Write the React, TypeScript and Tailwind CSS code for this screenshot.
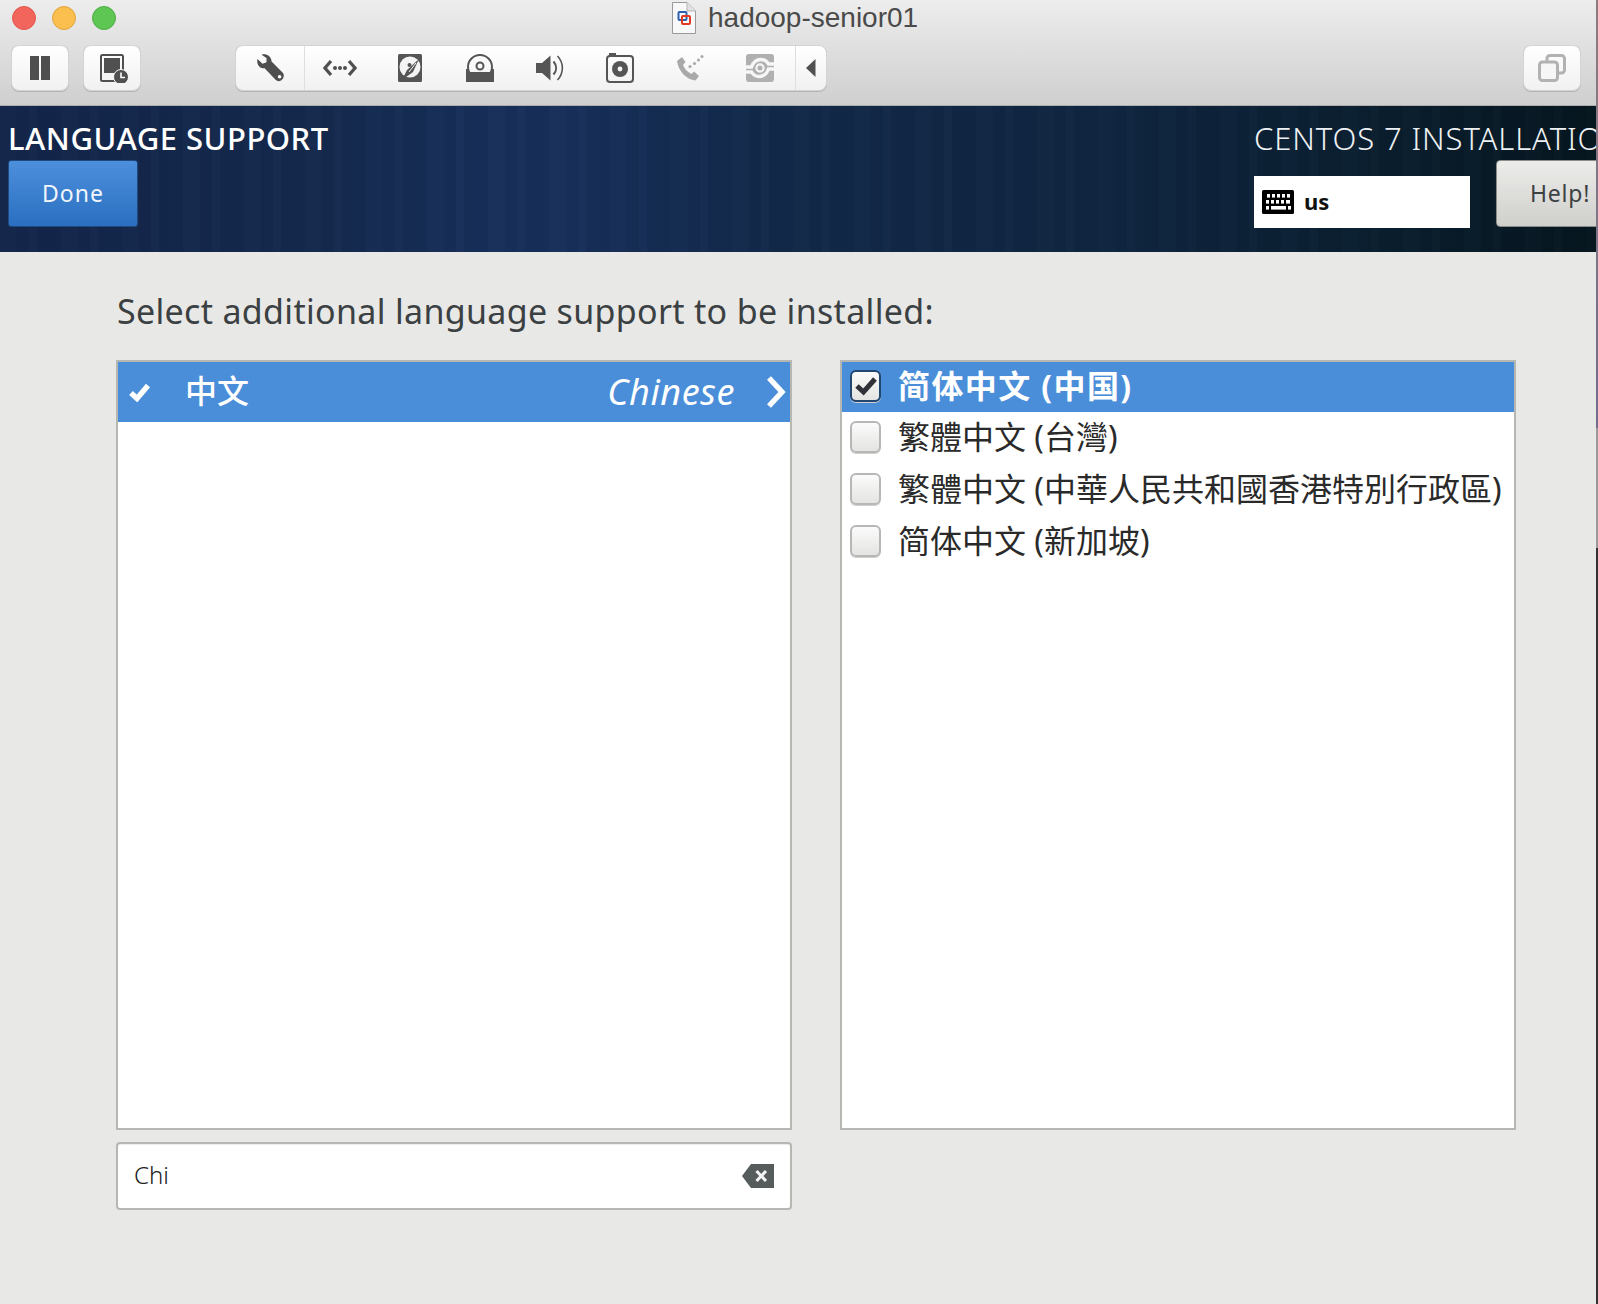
import React from "react";

const UI = "font-['Noto_Sans','Open_Sans','Noto_Sans_CJK_SC',sans-serif]";
const CJK = "font-['Noto_Sans','Noto_Sans_CJK_TC',sans-serif]";

function Wrench() {
  return (
    <svg width="28" height="28" viewBox="0 0 28 28">
      <path d="M1.5 5 L6.5 9.8 L10.5 8.2 L10.5 4 L5.5 .8 C9.5 -.6 15 1.2 15.6 7.4 L27 19 C28.6 21 27.8 25 25 26.6 C23 27.6 21 27.2 19.8 26 L8.6 14.2 C4 15 .2 10.4 1.5 5Z" fill="#4f4f4f" />
      <circle cx="23.6" cy="22.8" r="1.8" fill="#fff" />
    </svg>
  );
}
function Net() {
  return (
    <svg width="34" height="18" viewBox="0 0 34 18">
      <path d="M8 2 L2 9 L8 16 M26 2 L32 9 L26 16" fill="none" stroke="#505050" strokeWidth="3.2" />
      <circle cx="12" cy="9" r="2" fill="#505050" />
      <circle cx="17" cy="9" r="2" fill="#505050" />
      <circle cx="22" cy="9" r="2" fill="#505050" />
    </svg>
  );
}
function Hdd() {
  return (
    <svg width="24" height="28" viewBox="0 0 24 28">
      <rect width="24" height="28" rx="1.5" fill="#555" />
      <circle cx="12" cy="13" r="10.5" fill="#f4f4f4" />
      <path d="M4 26 L9 16 L21 5 L15 18 Z" fill="#555" />
      <path d="M11 18 L18 9" stroke="#f4f4f4" strokeWidth="1" />
      <circle cx="11.5" cy="11" r="2" fill="#555" />
    </svg>
  );
}
function Cd() {
  return (
    <svg width="28" height="28" viewBox="0 0 28 28">
      <circle cx="14" cy="13" r="12" fill="none" stroke="#555" strokeWidth="2" />
      <circle cx="14" cy="12" r="3.5" fill="none" stroke="#555" strokeWidth="2" />
      <path d="M0 28 V15 H2 V18 H26 V15 H28 V28 Z" fill="#555" />
    </svg>
  );
}
function Speaker() {
  return (
    <svg width="28" height="28" viewBox="0 0 28 28">
      <path d="M0 9 H6 L14.5 1.5 V26.5 L6 19 H0 Z" fill="#555" />
      <path d="M17.5 7.5 C21 11.5 21 16.5 17.5 20.5" fill="none" stroke="#555" strokeWidth="2" />
      <path d="M21.5 2 C28 9 28 19 21.5 26" fill="none" stroke="#555" strokeWidth="1.6" />
    </svg>
  );
}
function Camera() {
  return (
    <svg width="28" height="30" viewBox="0 0 28 30">
      <rect x="1" y="3" width="26" height="26" rx="3" fill="none" stroke="#555" strokeWidth="2" />
      <rect x="3" y="0" width="7" height="3" fill="#555" />
      <circle cx="14" cy="16" r="8" fill="#555" />
      <circle cx="14" cy="16" r="2.4" fill="#f6f6f6" />
    </svg>
  );
}
function Phone() {
  return (
    <svg width="28" height="28" viewBox="0 0 28 28">
      <path d="M1 7 L6 3 L9.5 8 L7 11 C8.5 15 11.5 18 15.5 20 L18 17.5 L23 22 L19.5 26.5 C10 25.5 2.5 17 1 7Z" fill="#a9a9a9" />
      <circle cx="14" cy="12.5" r="1.6" fill="#a9a9a9" />
      <circle cx="18.5" cy="9.5" r="1.6" fill="#a9a9a9" />
      <circle cx="22.5" cy="6" r="1.5" fill="#a9a9a9" />
      <circle cx="26" cy="2.5" r="1.5" fill="#a9a9a9" />
    </svg>
  );
}
function Cycle() {
  return (
    <svg width="28" height="28" viewBox="0 0 28 28">
      <rect width="28" height="28" rx="3" fill="#b0b0b0" />
      <path d="M0 13 H5.5 C7.5 7.5 11 5.5 15 5.5 C18.5 5.5 21 7.5 22.5 10 L28 10" fill="none" stroke="#f6f6f6" strokeWidth="3.4" />
      <path d="M28 15 H22.5 C20.5 20.5 17 22.5 13 22.5 C9.5 22.5 7 20.5 5.5 18 L0 18" fill="none" stroke="#f6f6f6" strokeWidth="3.4" />
      <circle cx="14" cy="14" r="3.6" fill="#b0b0b0" stroke="#f6f6f6" strokeWidth="2.2" />
    </svg>
  );
}
function Keyboard() {
  const keys: [number, number, number][] = [
    [5, 4, 3], [10, 4, 3], [15, 4, 3], [20, 4, 3], [25, 4, 3],
    [4, 10, 3], [9, 10, 3], [14, 10, 3], [19, 10, 3], [24, 10, 4],
    [4, 16, 3], [9, 16, 15], [26, 16, 3],
  ];
  return (
    <svg width="32" height="24" viewBox="0 0 32 24">
      <rect width="32" height="24" rx="1.5" fill="#000" />
      {keys.map(([x, y, w], i) => (
        <rect key={i} x={x} y={y} width={w} height="3.6" fill="#fff" />
      ))}
    </svg>
  );
}
function DocIcon() {
  return (
    <svg width="24" height="32" viewBox="0 0 24 32">
      <path d="M.5 .5 H15 L23.5 9 V31.5 H.5 Z" fill="#f8f8f8" stroke="#9a9a9a" />
      <path d="M15 .5 V9 H23.5" fill="#e2e2e2" stroke="#b5b5b5" />
      <rect x="6.5" y="10" width="8" height="8" rx="1" fill="none" stroke="#2a62b0" strokeWidth="2" />
      <rect x="10" y="14" width="8" height="8" rx="1" fill="none" stroke="#e23a22" strokeWidth="2" />
    </svg>
  );
}

function CheckBox({ checked }: { checked?: boolean }) {
  return (
    <span
      className={
        "flex h-8 w-[31px] shrink-0 items-center justify-center rounded-[6px] border-2 bg-gradient-to-b from-[#fbfbfb] to-[#e4e4e2] shadow-[0_1px_0_#cfcfcf] " +
        (checked ? "border-[#23476f]" : "border-[#b7b7b5]")
      }
    >
      {checked && (
        <svg width="24" height="20" viewBox="0 0 24 20">
          <path d="M3 10 L9.5 16 L21 3" fill="none" stroke="#2f3338" strokeWidth="5" />
        </svg>
      )}
    </span>
  );
}

const locales = [
  { t: "简体中文 (中国)", lang: "zh-CN", on: true, h: "h-[50px] pb-[2px]" },
  { t: "繁體中文 (台灣)", lang: "zh-TW", on: false, h: "h-[52px] pb-[3px]" },
  { t: "繁體中文 (中華人民共和國香港特別行政區)", lang: "zh-HK", on: false, h: "h-[52px] pb-[3px]" },
  { t: "简体中文 (新加坡)", lang: "zh-SG", on: false, h: "h-[52px] pb-[3px]" },
];

export default function App() {
  const btn = "flex h-11 w-14 items-center justify-center rounded-[7px] bg-gradient-to-b from-white to-[#f1f1f1] shadow-[0_0_0_1px_#d4d4d4,0_1px_0_1px_#b4b4b4]";
  const cell = "flex h-full w-[70px] items-center justify-center";
  return (
    <div className={"relative flex h-[1304px] w-[1598px] flex-col overflow-hidden bg-[#e8e8e6] " + UI}>
      {/* window title bar */}
      <div className="flex h-[106px] shrink-0 flex-col border-b border-[#adadad] bg-gradient-to-b from-[#ededed] to-[#cfcfcf]">
        <div className="flex h-[46px] items-start">
          <div className="flex gap-4 pl-3 pt-1.5">
            <span className="h-6 w-6 rounded-full border border-[#e2564d] bg-[#f2655c]" />
            <span className="h-6 w-6 rounded-full border border-[#e0a53c] bg-[#fbbf4f]" />
            <span className="h-6 w-6 rounded-full border border-[#4ead46] bg-[#5ec653]" />
          </div>
          <div className="ml-[556px] flex items-center pt-0.5">
            <DocIcon />
            <span className="ml-3 font-['Liberation_Sans',sans-serif] text-[28px] leading-8 text-[#4a4a4a]">hadoop-senior01</span>
          </div>
        </div>
        <div className="flex items-start pl-3">
          <div className={btn}>
            <svg width="20" height="24" viewBox="0 0 20 24">
              <rect width="9" height="24" fill="#4e4e4e" />
              <rect x="11" width="9" height="24" fill="#4e4e4e" />
            </svg>
          </div>
          <div className={"ml-4 " + btn}>
            <svg width="32" height="30" viewBox="0 0 32 30">
              <rect x="5" y="2" width="22" height="26" rx="1.5" fill="none" stroke="#505050" strokeWidth="2" />
              <rect x="8" y="5" width="16" height="15" fill="#505050" />
              <circle cx="25" cy="24" r="7.5" fill="#505050" stroke="#f8f8f8" strokeWidth="1" />
              <path d="M25 19.5 V24.5 H29" fill="none" stroke="#fff" strokeWidth="1.6" />
            </svg>
          </div>
          <div className={"ml-24 flex w-[590px] overflow-hidden " + btn}>
            <div className="flex h-full w-[69px] items-center justify-center border-r border-[#dedede]"><Wrench /></div>
            <div className={cell}><Net /></div>
            <div className={cell}><Hdd /></div>
            <div className={cell}><Cd /></div>
            <div className={cell}><Speaker /></div>
            <div className={cell}><Camera /></div>
            <div className={cell}><Phone /></div>
            <div className={cell}><Cycle /></div>
            <div className="flex h-full flex-1 items-center justify-center border-l border-[#dedede]">
              <svg width="10" height="18" viewBox="0 0 10 18"><path d="M9.5 0 V18 L0 9 Z" fill="#505050" /></svg>
            </div>
          </div>
          <div className={"ml-[698px] " + btn}>
            <svg width="28" height="28" viewBox="0 0 28 28" fill="none" stroke="#b2b2b2" strokeWidth="3">
              <rect x="9" y="1.5" width="17.5" height="17.5" rx="3" />
              <rect x="1.5" y="8" width="18" height="18.5" rx="3" fill="#f6f6f6" />
            </svg>
          </div>
        </div>
      </div>

      {/* installer header */}
      <div className="flex h-[146px] shrink-0 overflow-hidden bg-[repeating-linear-gradient(90deg,#ffffff02_0px,#ffffff02_17px,#00000006_17px,#00000006_29px,#ffffff03_29px,#ffffff03_37px,#00000008_37px,#00000008_61px),linear-gradient(90deg,#13264a_0%,#14294d_20%,#172f5a_30%,#172f5a_36%,#12294a_48%,#0f2540_70%,#0a1f30_85%,#06161f_100%)]">
        <div className="flex w-[1254px] shrink-0 flex-col pl-2">
          <div className="flex h-[54px] items-center pt-[10px] text-[31px] font-medium leading-none tracking-[0.5px] whitespace-nowrap text-white">LANGUAGE SUPPORT</div>
          <div className="flex h-[67px] w-[130px] items-center justify-center rounded-[3px] border border-[#1e4a80] bg-gradient-to-b from-[#4c8fdc] to-[#2a6fc1] text-[23px] tracking-[1px] text-[#f2f6fb]">Done</div>
        </div>
        <div className="flex flex-col">
          <div className="flex h-[54px] items-center pt-[10px] text-[31px] font-light leading-none tracking-[0.9px] whitespace-nowrap text-[#eef1f3]">CENTOS 7 INSTALLATION</div>
          <div className="flex items-start">
            <div className="mt-4 flex h-[52px] w-[216px] shrink-0 items-center bg-white pl-2">
              <Keyboard />
              <span className="ml-2.5 pb-0.5 text-[22px] font-bold leading-none text-[#111]">us</span>
            </div>
            <div className="ml-[26px] flex h-[67px] w-[110px] shrink-0 items-center rounded-[4px] border border-[#8b8b88] bg-gradient-to-b from-[#ececea] to-[#cfcfcc] pl-[33px] text-[23px] tracking-[0.8px] text-[#3c4143]">Help!</div>
          </div>
        </div>
      </div>

      {/* body */}
      <div className="flex flex-1 flex-col pl-[116px]">
        <h1 className="pl-px pt-[35px] text-[34px] font-normal leading-[48px] tracking-[0.32px] whitespace-nowrap text-[#3b4042]">Select additional language support to be installed:</h1>
        <div className="mt-[25px] flex gap-12">
          <div className="flex w-[676px] flex-col gap-3">
            <div className="h-[770px] border-2 border-[#b6b6b2] bg-white">
              <div className="flex h-[60px] items-center bg-[#4a8ed9] pl-2.5 pr-1 text-white">
                <svg width="24" height="20" viewBox="0 0 24 20"><path d="M3 11 L9 16.5 L20 3.5" fill="none" stroke="#fff" strokeWidth="5.4" /></svg>
                <span lang="zh-CN" className="mb-1.5 ml-[33px] font-['Noto_Sans_CJK_SC',sans-serif] text-[32px] font-medium leading-none">中文</span>
                <span className="ml-auto text-[36px] italic leading-none tracking-[0.6px]">Chinese</span>
                <svg className="ml-[31px]" width="20" height="32" viewBox="0 0 20 32"><path d="M3 2 L16 16 L3 30" fill="none" stroke="#fff" strokeWidth="5.4" /></svg>
              </div>
            </div>
            <div className="flex h-[68px] items-center rounded-[4px] border-2 border-[#b6b6b2] bg-white pl-4 pr-4 shadow-[inset_0_1px_0_#ececec]">
              <span className="pb-0.5 text-[24px] font-light text-[#222]">Chi</span>
              <svg className="ml-auto" width="32" height="24" viewBox="0 0 32 24">
                <path d="M9 0 H32 V24 H9 L0 12 Z" fill="#565c5c" />
                <path d="M14.5 7 L24 17 M24 7 L14.5 17" stroke="#f4f4f4" strokeWidth="3" />
              </svg>
            </div>
          </div>
          <div className={"h-[770px] w-[676px] border-2 border-[#b6b6b2] bg-white " + CJK}>
            {locales.map((l) => (
              <div key={l.lang} className={"flex items-center gap-[17px] pl-2 " + l.h + (l.on ? " bg-[#4a8ed9]" : "")}>
                <CheckBox checked={l.on} />
                <span
                  lang={l.lang}
                  className={"whitespace-nowrap text-[32px] leading-none " + (l.on ? "font-bold tracking-[1.4px] text-white" : "text-[#2a2a2a]")}
                >
                  {l.t}
                </span>
              </div>
            ))}
          </div>
        </div>
      </div>

      {/* window edge */}
      <div className="absolute right-0 top-0 flex h-full w-0.5 flex-col">
        <div className="h-[428px] bg-gradient-to-b from-[#8d7b7e] to-[#6f6e8c]" />
        <div className="h-[120px] bg-[#9a9a9a]" />
        <div className="flex-1 bg-[#333]" />
      </div>
    </div>
  );
}
